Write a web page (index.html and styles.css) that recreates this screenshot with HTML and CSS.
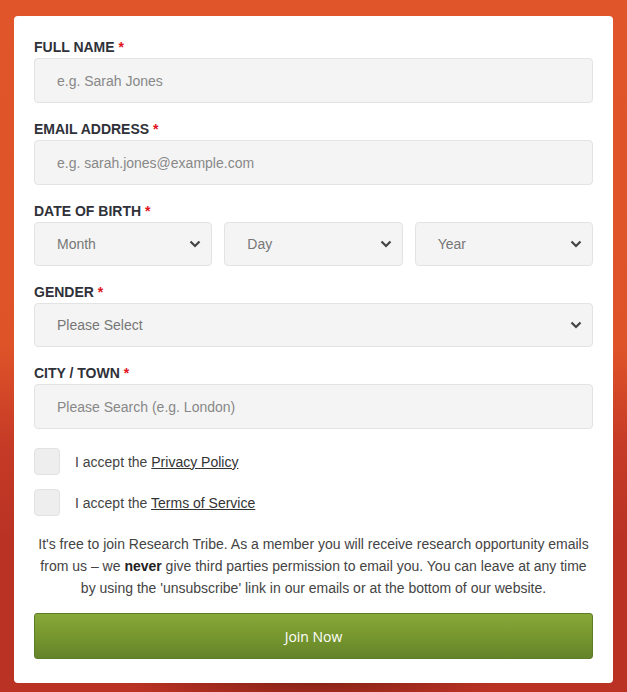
FILE: index.html
```html
<!DOCTYPE html>
<html lang="en">
<head>
<meta charset="utf-8">
<title>Join Research Tribe</title>
<link rel="stylesheet" href="styles.css">
</head>
<body>
<div class="page">
  <form class="card">
    <div class="field">
      <label class="label">FULL NAME <span class="req">*</span></label>
      <input class="input" type="text" placeholder="e.g. Sarah Jones">
    </div>
    <div class="field">
      <label class="label">EMAIL ADDRESS <span class="req">*</span></label>
      <input class="input" type="text" placeholder="e.g. sarah.jones@example.com">
    </div>
    <div class="field">
      <label class="label">DATE OF BIRTH <span class="req">*</span></label>
      <div class="dob">
        <div class="select"><span>Month</span><svg class="chev" viewBox="0 0 12 8"><path d="M1.5 1.5 L6 6 L10.5 1.5"/></svg></div>
        <div class="select"><span>Day</span><svg class="chev" viewBox="0 0 12 8"><path d="M1.5 1.5 L6 6 L10.5 1.5"/></svg></div>
        <div class="select"><span>Year</span><svg class="chev" viewBox="0 0 12 8"><path d="M1.5 1.5 L6 6 L10.5 1.5"/></svg></div>
      </div>
    </div>
    <div class="field">
      <label class="label">GENDER <span class="req">*</span></label>
      <div class="select"><span>Please Select</span><svg class="chev" viewBox="0 0 12 8"><path d="M1.5 1.5 L6 6 L10.5 1.5"/></svg></div>
    </div>
    <div class="field">
      <label class="label">CITY / TOWN <span class="req">*</span></label>
      <input class="input" type="text" placeholder="Please Search (e.g. London)">
    </div>
    <div class="checks">
      <div class="check"><span class="box"></span><span>I accept the <a href="#">Privacy Policy</a></span></div>
      <div class="check"><span class="box"></span><span>I accept the <a href="#">Terms of Service</a></span></div>
    </div>
    <p class="note">It's free to join Research Tribe. As a member you will receive research opportunity emails from us – we <b>never</b> give third parties permission to email you. You can leave at any time by using the 'unsubscribe' link in our emails or at the bottom of our website.</p>
    <button class="btn" type="button">Join Now</button>
  </form>
</div>
</body>
</html>
```
FILE: styles.css
```css
* { box-sizing: border-box; }
html, body { margin: 0; padding: 0; }
body {
  width: 627px;
  height: 692px;
  overflow: hidden;
  font-family: "Liberation Sans", Arial, sans-serif;
  background: linear-gradient(180deg, #e1552a 0%, #df5329 50%, #c63b26 64%, #b93224 78%, #b93224 100%);
}
.page {
  padding: 16px 14px 0 14px;
  position: relative;
}
.page::after {
  content: "";
  position: absolute;
  left: 120px;
  right: 120px;
  top: 676px;
  height: 30px;
  background: radial-gradient(ellipse at center top, rgba(90,20,10,0.65) 0%, rgba(90,20,10,0) 70%);
}
.card {
  position: relative;
  z-index: 1;
  width: 599px;
  background: #fff;
  border-radius: 4px;
  padding: 22px 20px 24px 20px;
  display: flex;
  flex-direction: column;
}
.field {
  display: flex;
  flex-direction: column;
  margin-bottom: 17px;
}
.label {
  font-size: 14px;
  font-weight: bold;
  color: #2f3139;
  line-height: 18px;
  margin-bottom: 2px;
}
.req { color: #e0121b; }
.input, .select {
  height: 45px;
  width: 100%;
  background: #f4f4f4;
  border: 1px solid #e3e3e3;
  border-radius: 4px;
  padding: 0 10px 0 22px;
  font-family: "Liberation Sans", Arial, sans-serif;
  font-size: 14px;
  color: #777;
  outline: none;
}
.input::placeholder { color: #888; }
.select {
  height: 44px;
  display: flex;
  align-items: center;
  justify-content: space-between;
  color: #777;
}
.dob {
  display: grid;
  grid-template-columns: 1fr 1fr 1fr;
  gap: 12px;
}
.chev {
  width: 12px;
  height: 8px;
  fill: none;
  stroke: #444;
  stroke-width: 2.2;
}
.checks {
  display: flex;
  flex-direction: column;
  gap: 14px;
  margin-top: 2px;
}
.check {
  display: flex;
  align-items: center;
  gap: 15px;
  font-size: 14px;
  color: #444;
}
.box {
  width: 26px;
  height: 27px;
  background: #eee;
  border: 1px solid #e2e2e2;
  border-radius: 4px;
  flex: none;
}
.check a { color: #333; text-decoration: underline; }
.note {
  margin: 17px 0 14px 0;
  text-align: center;
  font-size: 14px;
  line-height: 22px;
  color: #444;
}
.note b { color: #222; }
.btn {
  height: 46px;
  width: 100%;
  border: 1px solid #5d7c27;
  border-radius: 3px;
  background: linear-gradient(180deg, #87a83a 0%, #77972f 50%, #64842a 100%);
  color: #fff;
  font-family: "Open Sans", sans-serif;
  font-size: 14px;
  cursor: pointer;
}
```
